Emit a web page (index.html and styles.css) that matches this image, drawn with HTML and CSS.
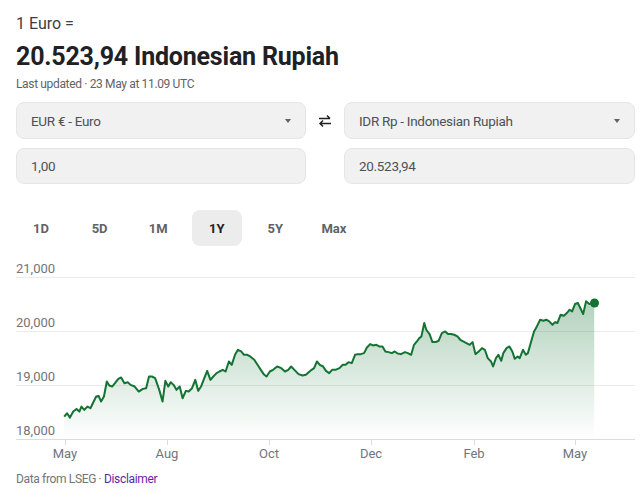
FILE: index.html
```html
<!DOCTYPE html>
<html lang="en">
<head>
    <meta charset="UTF-8">
    <meta name="viewport" content="width=device-width, initial-scale=1.0">
    <title>Euro to Indonesian Rupiah</title>
    <link rel="stylesheet" href="styles.css">
</head>
<body>
    <div class="rate-head">
        <div class="rate-from">1 Euro =</div>
        <div class="rate-to">20.523,94 Indonesian Rupiah</div>
        <div class="rate-time">Last updated · 23 May at 11.09 UTC</div>
    </div>

    <div class="converter">
        <div class="field select">
            <span>EUR € - Euro</span>
            <span class="caret"></span>
        </div>
        <div class="swap">
            <svg width="16" height="16" viewBox="0 0 16 16">
                <path d="M2 5.5h11M10 2.5l3 3" fill="none" stroke="#202124" stroke-width="1.5"/>
                <path d="M14 10.5H3M6 7.5l-3 3 3 3" fill="none" stroke="#202124" stroke-width="1.5"/>
            </svg>
        </div>
        <div class="field select">
            <span>IDR Rp - Indonesian Rupiah</span>
            <span class="caret"></span>
        </div>
        <div class="field">1,00</div>
        <div></div>
        <div class="field">20.523,94</div>
    </div>

    <div class="ranges">
        <div class="range">1D</div>
        <div class="range">5D</div>
        <div class="range">1M</div>
        <div class="range active">1Y</div>
        <div class="range">5Y</div>
        <div class="range">Max</div>
    </div>

    <!-- 1Y chart -->
    <svg class="chart" width="627" height="206" viewBox="0 0 627 206">
        <defs>
            <linearGradient id="fill" x1="0" y1="0" x2="0" y2="1">
                <stop offset="0" stop-color="#137333" stop-opacity="0.32"/>
                <stop offset="1" stop-color="#137333" stop-opacity="0"/>
            </linearGradient>
        </defs>
        <g class="grid">
            <line x1="0" y1="19.5" x2="619" y2="19.5"/>
            <line x1="0" y1="73.5" x2="619" y2="73.5"/>
            <line x1="0" y1="127.5" x2="619" y2="127.5"/>
        </g>
        <g class="ylabels">
            <text x="0" y="15">21,000</text>
            <text x="0" y="69">20,000</text>
            <text x="0" y="123">19,000</text>
            <text x="0" y="177">18,000</text>
        </g>
        <g transform="matrix(0.4096 0 0 0.334 -16.5 -3.4)">
            <path fill="url(#fill)" d="M158,485 L165,475 172,488 180,470 188,462 195,470 200,455 207,465 215,455 222,460 230,440 236,425 242,423 248,440 255,425 262,380 268,392 275,395 282,385 290,372 297,368 305,385 313,382 320,390 330,395 340,410 350,402 358,400 365,365 372,365 380,370 390,405 398,440 405,378 412,395 418,382 425,390 432,405 440,395 447,430 455,408 462,410 470,400 478,375 485,408 492,395 500,370 507,348 515,375 522,365 530,355 537,350 545,345 552,350 560,320 567,330 575,300 582,285 590,290 597,300 605,300 612,305 622,315 630,330 638,345 645,358 652,365 660,350 668,345 678,335 688,340 697,350 705,345 712,335 720,345 730,358 740,362 748,360 755,352 762,345 768,340 775,320 782,330 790,335 797,348 805,355 812,345 820,345 830,340 838,330 845,330 852,322 860,325 868,300 875,298 882,298 890,295 897,278 905,268 912,272 920,270 927,275 935,275 942,290 950,292 958,295 965,290 972,296 980,298 990,292 997,295 1005,300 1012,270 1020,258 1025,250 1030,245 1037,205 1042,225 1050,238 1057,262 1065,262 1072,258 1080,235 1088,230 1095,238 1102,238 1110,240 1118,245 1125,255 1132,260 1140,265 1148,270 1155,262 1162,298 1170,290 1178,280 1185,285 1192,310 1200,320 1205,335 1212,310 1218,300 1225,318 1230,295 1238,280 1245,275 1252,290 1258,312 1265,305 1270,310 1278,285 1285,300 1290,295 1298,260 1305,230 1312,215 1320,195 1328,198 1335,195 1342,200 1350,210 1357,202 1362,205 1370,180 1378,183 1385,175 1392,165 1398,170 1405,148 1412,145 1420,165 1425,178 1432,140 1440,148 1452,145 L1452,552 L158,552 Z"/>
            <path class="line" d="M158,485 L165,475 172,488 180,470 188,462 195,470 200,455 207,465 215,455 222,460 230,440 236,425 242,423 248,440 255,425 262,380 268,392 275,395 282,385 290,372 297,368 305,385 313,382 320,390 330,395 340,410 350,402 358,400 365,365 372,365 380,370 390,405 398,440 405,378 412,395 418,382 425,390 432,405 440,395 447,430 455,408 462,410 470,400 478,375 485,408 492,395 500,370 507,348 515,375 522,365 530,355 537,350 545,345 552,350 560,320 567,330 575,300 582,285 590,290 597,300 605,300 612,305 622,315 630,330 638,345 645,358 652,365 660,350 668,345 678,335 688,340 697,350 705,345 712,335 720,345 730,358 740,362 748,360 755,352 762,345 768,340 775,320 782,330 790,335 797,348 805,355 812,345 820,345 830,340 838,330 845,330 852,322 860,325 868,300 875,298 882,298 890,295 897,278 905,268 912,272 920,270 927,275 935,275 942,290 950,292 958,295 965,290 972,296 980,298 990,292 997,295 1005,300 1012,270 1020,258 1025,250 1030,245 1037,205 1042,225 1050,238 1057,262 1065,262 1072,258 1080,235 1088,230 1095,238 1102,238 1110,240 1118,245 1125,255 1132,260 1140,265 1148,270 1155,262 1162,298 1170,290 1178,280 1185,285 1192,310 1200,320 1205,335 1212,310 1218,300 1225,318 1230,295 1238,280 1245,275 1252,290 1258,312 1265,305 1270,310 1278,285 1285,300 1290,295 1298,260 1305,230 1312,215 1320,195 1328,198 1335,195 1342,200 1350,210 1357,202 1362,205 1370,180 1378,183 1385,175 1392,165 1398,170 1405,148 1412,145 1420,165 1425,178 1432,140 1440,148 1452,145"/>
        </g>
        <circle cx="578.5" cy="45" r="4.5" fill="#137333"/>
        <line class="axis" x1="0" y1="181.5" x2="619" y2="181.5"/>
        <g class="ticks">
            <line x1="49.5" y1="182" x2="49.5" y2="187"/>
            <line x1="151.5" y1="182" x2="151.5" y2="187"/>
            <line x1="253.5" y1="182" x2="253.5" y2="187"/>
            <line x1="355.5" y1="182" x2="355.5" y2="187"/>
            <line x1="458.5" y1="182" x2="458.5" y2="187"/>
            <line x1="559.5" y1="182" x2="559.5" y2="187"/>
        </g>
        <g class="xlabels">
            <text x="49" y="200">May</text>
            <text x="151" y="200">Aug</text>
            <text x="253" y="200">Oct</text>
            <text x="355" y="200">Dec</text>
            <text x="458" y="200">Feb</text>
            <text x="559" y="200">May</text>
        </g>
    </svg>

    <div class="source">Data from LSEG · <a href="#">Disclaimer</a></div>
</body>
</html>
```

FILE: styles.css
```css
body {
    margin: 0;
    padding: 14px 8px 0 16px;
    font-family: Roboto, Arial, sans-serif;
    color: #202124;
    background: #fff;
}
.rate-from {
    font-size: 16px;
    line-height: 20px;
    color: #3c4043;
}
.rate-to {
    margin-top: 7px;
    font-size: 25px;
    font-weight: bold;
    line-height: 32px;
    letter-spacing: -0.2px;
}
.rate-time {
    margin-top: 3px;
    font-size: 12px;
    line-height: 16px;
    color: #5f6368;
    letter-spacing: -0.35px;
}
.converter {
    display: grid;
    grid-template-columns: 290px 38px 291px;
    grid-template-rows: 37px 36px;
    row-gap: 9px;
    margin-top: 10px;
}
.field {
    display: flex;
    align-items: center;
    justify-content: space-between;
    padding: 0 14px;
    background: #f1f1f1;
    border: 1px solid #e6e6e6;
    border-radius: 8px;
    font-size: 13.5px;
    color: #4d5156;
    letter-spacing: -0.3px;
}
.caret {
    width: 0;
    height: 0;
    margin-right: 0;
    border-left: 3.5px solid transparent;
    border-right: 3.5px solid transparent;
    border-top: 4px solid #5f6368;
}
.swap {
    display: flex;
    align-items: center;
    justify-content: center;
}
.ranges {
    display: flex;
    gap: 8.6px;
    margin-top: 26px;
}
.range {
    width: 50px;
    height: 36px;
    display: flex;
    align-items: center;
    justify-content: center;
    border-radius: 8px;
    font-size: 13px;
    font-weight: bold;
    color: #5f6368;
}
.range.active {
    background: #ececec;
    color: #202124;
}
.chart {
    display: block;
    margin-top: 12px;
    font-family: Roboto, Arial, sans-serif;
}
.grid line {
    stroke: #ebebeb;
    stroke-width: 1;
}
.axis {
    stroke: #dadce0;
    stroke-width: 1;
}
.ticks line {
    stroke: #dadce0;
}
.ylabels text {
    font-size: 13px;
    fill: #70757a;
}
.xlabels text {
    font-size: 13px;
    fill: #70757a;
    text-anchor: middle;
}
.line {
    fill: none;
    stroke: #137333;
    stroke-width: 2;
    stroke-linejoin: round;
    vector-effect: non-scaling-stroke;
}
.source {
    margin-top: 8px;
    font-size: 12px;
    color: #70757a;
    letter-spacing: -0.35px;
}
.source a {
    color: #681da8;
    text-decoration: none;
}
```
